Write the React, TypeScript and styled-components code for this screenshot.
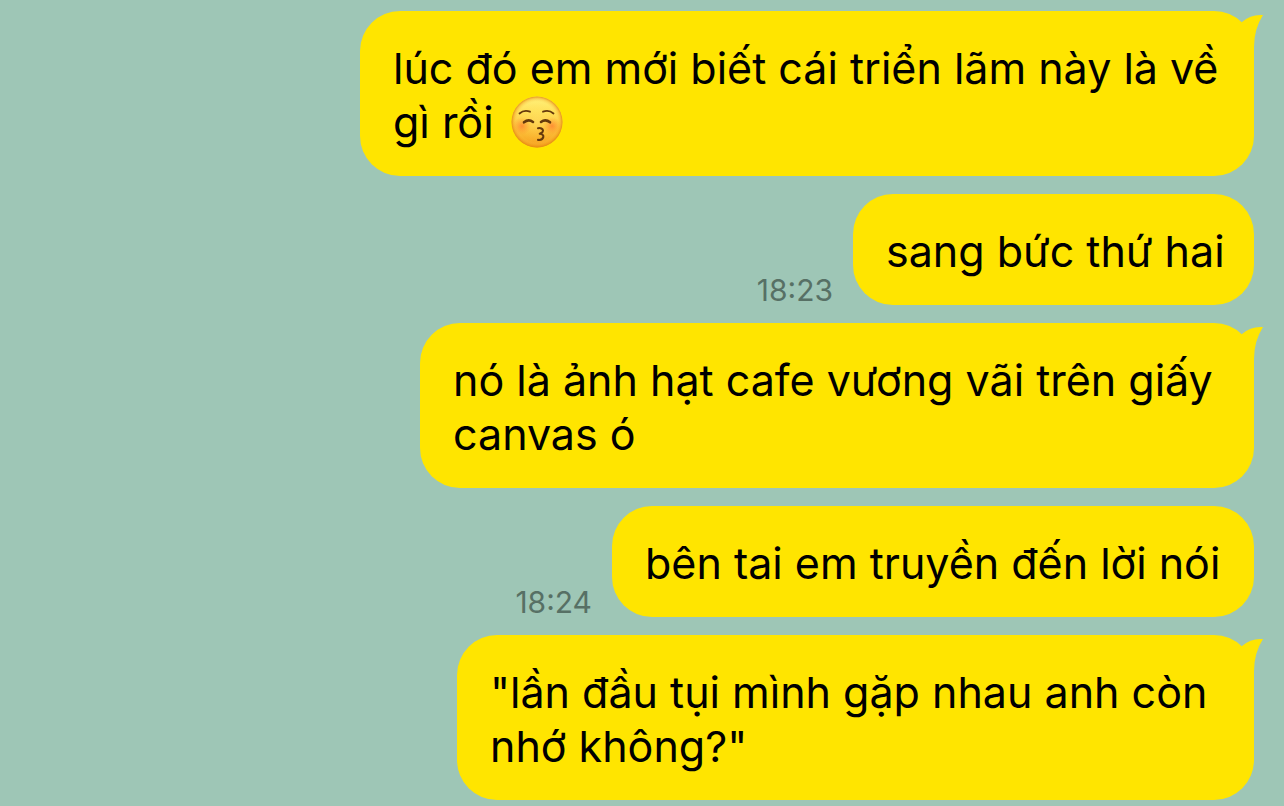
import React from "react";
import styled, { createGlobalStyle } from "styled-components";

const GlobalStyle = createGlobalStyle`
  body {
    margin: 0;
    background: #9ec6b6;
    font-family: Inter, "Noto Sans", sans-serif;
  }
`;

const Thread = styled.main`
  display: flex;
  flex-direction: column;
  align-items: flex-end;
  gap: 18px;
  padding: 11px 30px 6px;
`;

const Row = styled.article`
  display: flex;
  align-items: flex-end;
  gap: 20px;
`;

const Time = styled.time`
  color: #577065;
  font-size: 30px;
  line-height: 30px;
`;

const Bubble = styled.div<{ $minWidth: number }>`
  position: relative;
  box-sizing: border-box;
  min-width: ${({ $minWidth }) => $minWidth}px;
  padding: 30px 28px 27px 33px;
  border-radius: 40px;
  background: #ffe500;
`;

const Message = styled.p`
  margin: 0;
  color: #000;
  font-size: 43px;
  line-height: 54px;
  white-space: pre-line;
`;

const TailShape = styled.svg`
  position: absolute;
  top: 0;
  right: -10px;
  width: 40px;
  height: 44px;
  fill: #ffe500;
`;

const EmojiFace = styled.svg`
  width: 52px;
  height: 52px;
  margin-left: 5px;
  vertical-align: -10px;
`;

function Tail() {
  return (
    <TailShape viewBox="0 0 40 44" aria-hidden="true">
      <path d="M10 44 L10 20 L18 11 Q27 3 39 4 Q30 18 30 36 L30 44 Z" />
    </TailShape>
  );
}

function KissingFace() {
  return (
    <EmojiFace viewBox="0 0 52 52" role="img" aria-label="😚">
      <defs>
        <linearGradient id="skin" x1="0" y1="0" x2="0" y2="1">
          <stop offset="0" stopColor="#fff27c" />
          <stop offset="0.3" stopColor="#ffe15a" />
          <stop offset="0.65" stopColor="#fdbf38" />
          <stop offset="1" stopColor="#f5a01e" />
        </linearGradient>
        <radialGradient id="glow" cx="0.5" cy="0.5" r="0.5">
          <stop offset="0" stopColor="#ffee80" stopOpacity="0.3" />
          <stop offset="0.78" stopColor="#ffd850" stopOpacity="0" />
          <stop offset="0.92" stopColor="#f0981a" stopOpacity="0.4" />
          <stop offset="1" stopColor="#e08410" stopOpacity="0.85" />
        </radialGradient>
        <radialGradient id="blush">
          <stop offset="0" stopColor="#ff6a2c" stopOpacity="0.6" />
          <stop offset="1" stopColor="#ff8a30" stopOpacity="0" />
        </radialGradient>
      </defs>
      <circle cx="26" cy="26" r="25.5" fill="url(#skin)" />
      <circle cx="26" cy="26" r="25.5" fill="url(#glow)" />
      <circle cx="11" cy="30" r="9" fill="url(#blush)" />
      <circle cx="41" cy="30" r="9" fill="url(#blush)" />
      <g fill="none" stroke="#65390c" strokeLinecap="round" strokeLinejoin="round">
        <path strokeWidth="1.8" d="M8.5 17.5 Q13 13.6 19 15.7 M32 15.7 Q38 13.6 42.5 17.5" />
        <path strokeWidth="2.6" d="M13 26.3 Q17.5 22.6 22 26 M30 26 Q34.5 22.6 39 26.3" />
        <path
          strokeWidth="2.1"
          d="M27 32.2 C29.5 31.6 32 32.7 32 34.8 C32 36.5 30.5 37 28.8 37.8 C31 38 32.8 38.9 32.3 41.1 C31.8 43.4 29.4 44.2 27 43.9"
        />
      </g>
    </EmojiFace>
  );
}

interface ChatMessage {
  text: string;
  minWidth: number;
  time?: string;
  tail?: boolean;
  emoji?: boolean;
}

const messages: ChatMessage[] = [
  { text: "lúc đó em mới biết cái triển lãm này là về\ngì rồi ", minWidth: 894, tail: true, emoji: true },
  { text: "sang bức thứ hai", minWidth: 401, time: "18:23" },
  { text: "nó là ảnh hạt cafe vương vãi trên giấy\ncanvas ó", minWidth: 834, tail: true },
  { text: "bên tai em truyền đến lời nói", minWidth: 642, time: "18:24" },
  { text: "\"lần đầu tụi mình gặp nhau anh còn\nnhớ không?\"", minWidth: 797, tail: true },
];

export default function App() {
  return (
    <>
      <GlobalStyle />
      <Thread lang="vi">
        {messages.map(({ text, minWidth, time, tail, emoji }) => (
          <Row key={text}>
            {time && <Time>{time}</Time>}
            <Bubble $minWidth={minWidth}>
              {tail && <Tail />}
              <Message>
                {text}
                {emoji && <KissingFace />}
              </Message>
            </Bubble>
          </Row>
        ))}
      </Thread>
    </>
  );
}
